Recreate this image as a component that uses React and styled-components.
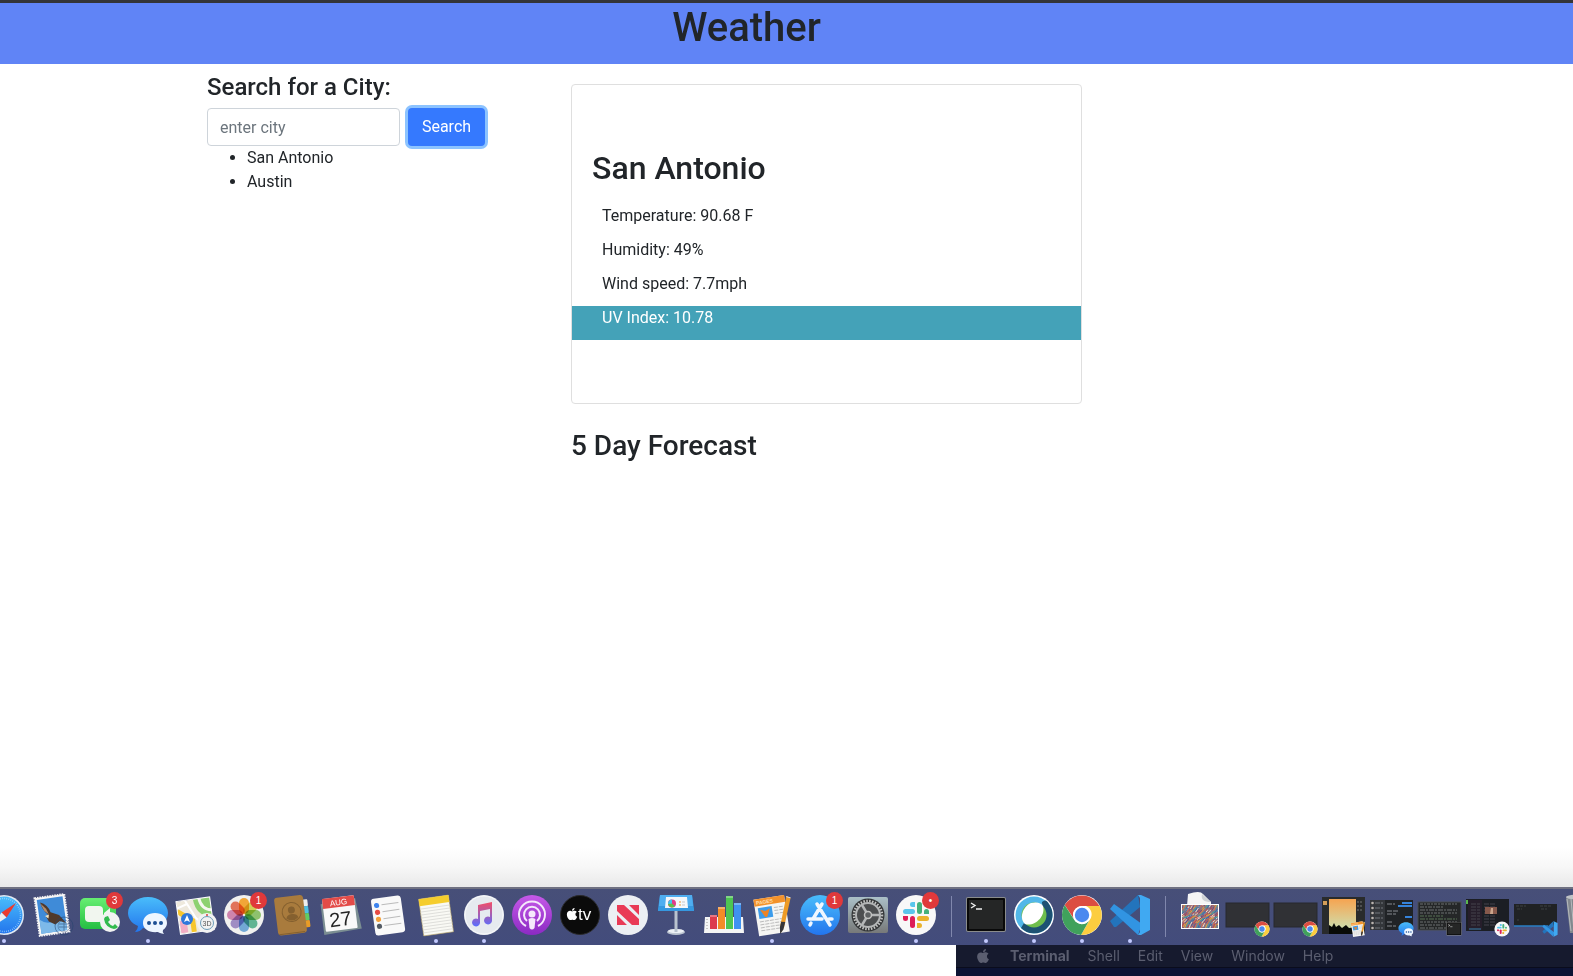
import React from "react";
import styled, { createGlobalStyle } from "styled-components";
import { FaApple } from "react-icons/fa";

const GlobalStyle = createGlobalStyle`
  *, *::before, *::after { box-sizing: border-box; }
  body {
    margin: 0;
    background: #fff;
    color: #212529;
    font: 400 16px/24px Roboto, Inter, "Liberation Sans", sans-serif;
  }
  h1, h2, h3, h4, p, ul { margin: 0; font-weight: 500; }
`;

const Screen = styled.div`
  display: flex;
  flex-direction: column;
  min-height: 100vh;
  overflow: hidden;
`;

const Banner = styled.header`
  height: 64px;
  padding-right: 80px;
  border-top: 3px solid #343538;
  background: #6084f6;
  text-align: center;
`;

const Title = styled.h1`
  font-size: 40px;
  line-height: 50px;
`;

const Main = styled.main`
  flex: 1;
  display: flex;
  padding: 0 16px 40px 207px;
  background: linear-gradient(to top, #e9e9e9, #f7f7f7 50%, #fff) bottom / 100% 40px no-repeat #fff;
`;

const Sidebar = styled.section`
  flex: 0 0 364px;
  padding-top: 8px;
`;

const SearchLabel = styled.label`
  display: block;
  margin-bottom: 6px;
  font-size: 24px;
  line-height: 30px;
  font-weight: 500;
`;

const SearchForm = styled.form`
  display: flex;
  flex-wrap: wrap;
`;

const CityInput = styled.input`
  width: 193px;
  height: 38px;
  margin-right: 8px;
  padding: 6px 12px;
  border: 1px solid #ced4da;
  border-radius: 4px;
  background: #fff;
  font: inherit;
  &::placeholder { color: #6c757d; opacity: 1; }
`;

const SearchButton = styled.button`
  min-width: 77px;
  height: 38px;
  padding: 0 12px;
  border: 0;
  border-radius: 4px;
  background: #3579fe;
  box-shadow: 0 0 0 3px #8cc3ff;
  color: #fff;
  font: inherit;
`;

const CityList = styled.ul`
  padding-left: 40px;
  font-weight: 400;
`;

const Results = styled.section`
  flex: 1;
  max-width: 511px;
  padding-top: 20px;
`;

const Card = styled.article`
  padding: 60px 0 63px;
  border: 1px solid #dfdfdf;
  border-radius: 4px;
`;

const CityName = styled.h2`
  padding: 0 20px;
  margin-bottom: 13px;
  font-size: 32px;
  line-height: 46px;
`;

const Reading = styled.p`
  height: 34px;
  padding: 0 30px;
  background: ${(p) => (p.$highlight ? "#44a2b8" : "transparent")};
  color: ${(p) => (p.$highlight ? "#fff" : "inherit")};
  font-weight: 400;
`;

const ForecastTitle = styled.h3`
  margin-top: 25px;
  font-size: 28px;
  line-height: 34px;
`;

const Dock = styled.nav`
  display: flex;
  height: 58px;
  margin-right: -80px;
  border-top: 2px solid #6f7181;
  background: linear-gradient(#474f78, #434c7c);
`;

const DockButton = styled.button`
  position: relative;
  flex: 0 0 48px;
  height: 56px;
  padding: 0;
  border: 0;
  background: none;
  &:first-child { margin-left: -20px; }
  & > svg { display: block; }
`;

const Badge = styled.span`
  position: absolute;
  top: 3px;
  right: 1px;
  width: 17px;
  height: 17px;
  border-radius: 50%;
  background: #e0393b;
  color: #fff;
  font-size: 10px;
  line-height: 17px;
`;

const RunningDot = styled.span`
  position: absolute;
  bottom: 2px;
  left: 22px;
  width: 4px;
  height: 4px;
  border-radius: 50%;
  background: #c3caff;
`;

const Divider = styled.span`
  flex: 0 0 22px;
  height: 41px;
  margin-top: 7px;
  background: linear-gradient(#8087ad, #8087ad) center / 1px 100% no-repeat;
`;

const SecondScreen = styled.div`
  display: flex;
  align-items: flex-start;
  gap: 18px;
  height: 31px;
  margin-left: 956px;
  padding-left: 19px;
  border-bottom: 8px solid #0c1334;
  background: #161a2e;
  box-shadow: inset 0 -1px #0a0c1c;
  color: #5b5e70;
  font-family: Inter, Roboto, sans-serif;
  font-size: 14px;
  line-height: 22px;
`;

const AppleMark = styled.span`
  display: flex;
  width: 17px;
  height: 22px;
  align-items: center;
`;

const MenuItem = styled.span`
  font-weight: ${(p) => (p.$strong ? 700 : 400)};
`;

const range = (n) => Array.from({ length: n }, (_, i) => i);

const Chrome = () => (
  <g>
    <circle r="20" fill="#fff" />
    <path d="M-17.3-10A20 20 0 0 1 17.3-9H0A9 9 0 0 0-8 4Z" fill="#dc4d41" />
    <path d="M17.6-9A20 20 0 0 1-1 20L8 4.500A9 9 0 0 0 4-9Z" fill="#fccd3f" />
    <path d="M-17.3-10A20 20 0 0 0-1 20L7.500 5A9 9 0 0 1-8 4.500Z" fill="#40a15c" />
    <circle r="9" fill="#fff" />
    <circle r="7.200" fill="#4a88ef" />
  </g>
);

const Code = () => (
  <g>
    <path d="M-20 6L8-20L10-8L-14 12L-16 12Z" fill="#2374bc" />
    <path d="M-20-6L-16-11L12 9L8 20Z" fill="#3194e2" />
    <path d="M8-20H11L20-16V15L11 20H8L10 17V-17Z" fill="#40a9f2" />
  </g>
);

const Messages = () => (
  <g>
    <path d="M0-18C11-18 20-11 20-2S11 14 0 14L-5 13Q-8 17-13 17Q-10 14-10 11C-17 8-20 3-20-2C-20-11-11-18 0-18Z" fill="url(#sky)" />
    <path d="M7-2C14-2 19 2 19 8Q19 12 15 15Q14 17 16 19Q11 18 10 17C1 18-5 14-5 8S0-2 7-2Z" fill="#eef6ff" />
    {[1, 7, 13].map((x) => <circle key={x} cx={x} cy="8" r="2" fill="#1d4f93" />)}
  </g>
);

const Slack = () => (
  <g>
    <circle r="20" fill="#f8f8f8" />
    {[["#59c5ec", 0], ["#44b17c", 90], ["#eab32d", 180], ["#dd1e58", 270]].map(([c, r]) => (
      <g key={c} transform={`rotate(${r})`} fill={c}>
        <rect x="-13" y="-6" width="12" height="5" rx="2.500" />
        <path d="M-1-8V-13H-3.500A2.500 2.500 0 0 0-3.500-8Z" />
      </g>
    ))}
  </g>
);

const Terminal = () => (
  <g>
    <rect x="-20" y="-18" width="40" height="35" rx="2" fill="#8a8c8c" />
    <rect x="-19" y="-17" width="38" height="33" rx="1" fill="#090909" />
    <rect x="-17" y="-15" width="34" height="29" fill="#252626" />
    <path d="M-15-12L-11-9.500L-15-7M-10-6H-4" stroke="#eee" strokeWidth="1.400" fill="none" />
  </g>
);

const Pages = () => (
  <g transform="rotate(-9)">
    <rect x="-16" y="-18" width="31" height="37" fill="#f5f5f3" />
    <rect x="-16" y="-18" width="31" height="7" fill="#f3922b" />
    <text x="-14" y="-12.500" fontSize="5" fontWeight="700" fill="#ffe0b5">PAGES</text>
    <rect x="-13" y="-9" width="14" height="11" fill="#3c9ceb" />
    <path d="M-11-7L-6-5L-1-7L-5 1H-7Z" fill="#ed8426" />
    {range(7).map((i) => <path key={i} d={i < 3 ? `M3 ${-7 + i * 3}H12` : `M-13 ${-4 + i * 3}H9`} stroke="#bbb" strokeDasharray="4 1" />)}
    <path d="M17-16L21-14L10 14L6 19L6 13Z" fill="#ee9b26" />
    <path d="M8 8L12 9L9 16L5 20L6 13Z" fill="#35363b" />
    <path d="M17-16L21-14" stroke="#eee" />
  </g>
);

const Safari = () => (
  <g>
    <circle r="20" fill="#dfe8f2" />
    <circle r="18.500" fill="url(#sky)" />
    <circle r="16.500" fill="none" stroke="#b6e3ff" strokeWidth="1.500" strokeDasharray=".6 1.500" />
    <path d="M12-12L2.500 2.500L-2.500-2.500Z" fill="#eb3b2e" />
    <path d="M-12 12L2.500 2.500L-2.500-2.500Z" fill="#eee" />
  </g>
);

const Mail = () => (
  <g>
    <g transform="rotate(-8)">
      <rect x="-15" y="-19" width="30" height="38" fill="#f6f6f6" stroke="#f6f6f6" strokeWidth="2" strokeDasharray="1.500 1" />
      <rect x="-13" y="-17" width="26" height="34" fill="#3f8bd8" />
      <path d="M-13 3Q-4 11 4 4L13 9V17H-13Z" fill="#7db9e9" />
      <path d="M-10-14Q-3-11-1-3L7 1L13 10L7 7L2 10L-4 6L-6 1L-4-1Q-9-6-10-14Z" fill="#50392b" />
      <path d="M-10-13L-5-7L-3-1L-7-5Z" fill="#b08d70" />
      <path d="M-7 0L-3-1L-4 3Z" fill="#f3e6c3" />
    </g>
    <circle cx="12" cy="11" r="9" fill="none" stroke="#25446e" opacity=".55" />
    <circle cx="12" cy="11" r="6" fill="none" stroke="#25446e" opacity=".4" />
    <path d="M7 9H17M7 12H17M12 6V16" stroke="#25446e" opacity=".55" />
  </g>
);

const FaceTime = () => (
  <g>
    <rect x="-20" y="-17" width="36" height="31" rx="5" fill="url(#lime)" />
    <rect x="-15" y="-9" width="18" height="16" rx="4" fill="#f1f6ef" />
    <path d="M4-2L10-7V5H4Z" fill="#f1f6ef" />
    <circle cx="10" cy="7" r="10" fill="#f1f3f2" />
    <path d="M5 2L8 1L10 5L8 7Q10 10 13 11L15 9L18 12Q16 14 14 14Q5 12 4 4Z" fill="#32ba4e" />
  </g>
);

const Maps = () => (
  <g>
    <g transform="rotate(-8)">
      <svg x="-18" y="-16" width="34" height="33" viewBox="-18 -16 34 33">
        <rect x="-18" y="-16" width="34" height="33" fill="#eee9dd" />
        <path d="M-17 4H-10V16H-17Z" fill="#f2adc4" />
        <path d="M-1-16H16V4Q0 2-1-16Z" fill="#8ed171" />
        <path d="M5-17Q6-4 17-3" stroke="#f7f7f1" strokeWidth="3" fill="none" />
        <path d="M-18-6L-4 5V18" stroke="#f7c62d" strokeWidth="5" fill="none" />
        <path d="M-9-16L-1 2L9 16M-18-9L-8-12" stroke="#fff" strokeWidth="2" fill="none" />
      </svg>
      <rect x="-18" y="-16" width="34" height="33" fill="none" stroke="#fff" />
    </g>
    <circle cx="-9" cy="4" r="6" fill="#2f78db" />
    <path d="M-9 0L-6 7L-9 5.500L-12 7Z" fill="#fff" />
    <circle cx="11" cy="8" r="10" fill="#f2f2f2" />
    <circle cx="11" cy="8" r="6.500" fill="none" stroke="#6b9cb9" />
    <text x="11" y="10.500" fontSize="7" textAnchor="middle" fill="#555">3D</text>
    <circle cx="11" cy="0" r="1" fill="#d8403c" />
  </g>
);

const Photos = () => (
  <g>
    <circle r="20" fill="#f1f1ef" />
    {["#ffa31a", "#d7d73e", "#85c55d", "#4fb58d", "#63a5e0", "#9a84c9", "#d479ae", "#ed6544"].map((c, i) => (
      <Petal key={c} x="-5" y="-17" width="10" height="16" rx="5" fill={c} opacity=".86" transform={`rotate(${i * 45})`} />
    ))}
  </g>
);

const Petal = styled.rect`
  mix-blend-mode: multiply;
`;

const Contacts = () => (
  <g transform="rotate(-7)">
    {["#eee", "#4fc1e3", "#62cb63", "#e99c27"].map((c, i) => <rect key={c} x="11" y={-14 + i * 7} width="6" height="7" rx="1" fill={c} />)}
    <rect x="-16" y="-19" width="29" height="38" rx="3" fill="#a97b3d" />
    <path d="M-15 18H11" stroke="#85602f" />
    <circle cy="-3" r="9.500" fill="none" stroke="#85602f" />
    <circle cy="-5" r="3.500" fill="#85602f" />
    <path d="M-6 3Q-5-1 0-1T6 3Q0 8-6 3Z" fill="#85602f" />
  </g>
);

const Calendar = () => (
  <g transform="rotate(-7)">
    <path d="M-18-13L17-15L20 16L-18 18Z" fill="#7b8e92" />
    <rect x="-16" y="-18" width="32" height="33" rx="1" fill="#f9f9f9" />
    <rect x="-16" y="-18" width="32" height="10" fill="#e34b48" />
    <text y="-10" fontSize="8" textAnchor="middle" fill="#fff">AUG</text>
    <text y="11" fontSize="20" fontWeight="300" textAnchor="middle" fill="#252525">27</text>
  </g>
);

const Reminders = () => (
  <g transform="rotate(-8)">
    <rect x="-15" y="-18" width="30" height="37" rx="3" fill="#f9f9f9" />
    {["#3d83ef", "#e84b44", "#f3a03b", "#535b64"].map((c, i) => (
      <g key={c}>
        <circle cx="-10" cy={-11 + i * 7} r="2.600" fill={c} />
        <path d={`M-5 ${-11 + i * 7}H12`} stroke="#bbb" />
      </g>
    ))}
  </g>
);

const Notes = () => (
  <g transform="rotate(-8)">
    <rect x="-15" y="-18" width="30" height="37" fill="#f9f9f4" stroke="#b8a363" strokeWidth=".6" />
    <rect x="-15" y="-18" width="30" height="7" fill="#f5cd2d" />
    {range(9).map((i) => <path key={i} d={`M-15 ${-8 + i * 3}H15`} stroke="#d9d9d6" strokeWidth=".8" />)}
  </g>
);

const Music = () => (
  <g>
    <circle r="20" fill="#e6eaef" />
    <circle r="19" fill="none" stroke="#f9fafc" />
    <path d="M-6-10L8-13V6A4 4 0 1 1 6 2V-6L-4-4V8A4 4 0 1 1-6 4Z" fill="url(#note)" />
  </g>
);

const Podcasts = () => (
  <g>
    <circle r="20" fill="url(#purple)" />
    <g fill="none" stroke="#f5e9fb" strokeWidth="2">
      <path d="M-6 11A13 13 0 1 1 6 11" />
      <path d="M-5 6A8 8 0 1 1 5 6" />
    </g>
    <circle cy="-1" r="3.500" fill="#f5e9fb" />
    <path d="M-3.500 4Q0 2 3.500 4L2.500 13Q0 16-2.500 13Z" fill="#f5e9fb" />
  </g>
);

const AppleTv = () => (
  <g>
    <circle r="19.500" fill="#0b0b0b" stroke="#2a2a2b" />
    <FaApple x={-15} y={-8} size={14} color="#fff" />
    <text x="-2" y="5" fontSize="17" fontWeight="500" fill="#fff">tv</text>
  </g>
);

const News = () => (
  <g>
    <circle r="20" fill="#eceff3" />
    <path d="M-11-10H-4L11 4V10H4L-11-4ZM1-10H11V0ZM-11 0L-1 10H-11Z" fill="#e93a56" />
  </g>
);

const Keynote = () => (
  <g>
    <ellipse cy="17" rx="9" ry="3" fill="#bcc5d1" />
    <ellipse cy="16" rx="8" ry="2" fill="#edf1f5" />
    <rect x="-1.500" y="-4" width="3" height="21" fill="#b9c3cf" />
    <path d="M-16-20H16L18-6V-4H-18V-6Z" fill="#3698e0" />
    <path d="M-16-20H16L17-9H-17Z" fill="#50aef0" />
    <path d="M-10-18H11L12-7H-11Z" fill="#f6f8fa" />
    <circle cx="-4" cy="-11.500" r="4" fill="#e23b8a" />
    <path d="M-4-15.500A4 4 0 0 0-8-11H-4Z" fill="#45c4ea" />
    <path d="M-8-11A4 4 0 0 0-1-9L-4-11.500Z" fill="#5dc14b" />
    <path d="M3-13H5M3-10H5" stroke="#e99b38" />
    <path d="M6-13H9M6-10H9" stroke="#c5c9ce" />
  </g>
);

const Numbers = () => (
  <g>
    <path d="M-19 2H19L20 18H-20Z" fill="#f4f5f5" />
    <path d="M-17 4V16" stroke="#999" strokeDasharray="1 2" />
    {[[-14, 0, "#dc3b4d"], [-6, -8, "#f38c27"], [2, -19, "#4dc552"], [10, -12, "#3f92f0"]].map(([x, y, c]) => (
      <g key={x}><rect x={x} y={y} width="7" height={14 - y} fill={c} /><rect x={x} y={y} width="7" height="2" fill="#fff" opacity=".3" /></g>
    ))}
  </g>
);

const AppStore = () => (
  <g>
    <circle r="20" fill="url(#sky)" />
    <g stroke="#f0f7ff" strokeWidth="3.500" strokeLinecap="round" fill="none">
      <path d="M2-11L-7 4M-3-11L10 10M-12 4H2M9 4H12M-9 8L-10 10" />
    </g>
  </g>
);

const Settings = () => (
  <g>
    <rect x="-20" y="-18" width="40" height="36" rx="2" fill="url(#steel)" />
    <circle r="16.500" fill="#333537" />
    <circle r="14" fill="none" stroke="#c2c3c2" strokeWidth="2.500" strokeDasharray="1.500 1.400" />
    <circle r="12" fill="#4c4e50" stroke="#b4b6b7" strokeWidth="2" />
    <path d="M0 0L11 0M0 0L-6-10M0 0L-6 10" stroke="#b4b6b7" strokeWidth="2.500" />
    <circle r="3.500" fill="#5e6163" stroke="#c2c3c2" strokeWidth="1.500" />
  </g>
);

const Webex = () => (
  <g>
    <circle r="20" fill="#fff" />
    <circle r="18.500" fill="#52b7e8" />
    <path d="M8-13Q12-17 15-11A18.500 18.500 0 0 1-13 13L-10 8Q2 13 9 4Z" fill="#1d5273" />
    <circle r="12.500" fill="#6fbe4c" />
    <path d="M9-9C12 2 0 12-9 9C-15 4-12-8-3-12Q6-14 9-9Z" fill="#fff" />
  </g>
);

const artColors = ["#2e6caf", "#e8a13b", "#c94646", "#eee2cd", "#4a9ea0", "#694c83", "#d76a55"];

const Artwork = () => (
  <g>
    <path d="M-13-9L-12-21Q0-25 3-21L11-13V-9Z" fill="#f5f5f5" />
    <path d="M2-21Q0-13 11-13Z" fill="#cfd2d5" />
    <rect x="-19" y="-11" width="38" height="25" fill="#fff" />
    <svg x="-18" y="-10" width="36" height="23" viewBox="0 0 36 23">
      <rect width="36" height="23" fill="#8a7684" />
      {range(44).map((i) => (
        <path key={i} d={`M${i * 1.5 - 26} 23q3-9 10-11t12-13`} fill="none" stroke={artColors[(i * 3) % 7]} strokeWidth="1" strokeDasharray={`${5 + (i % 4)} ${2 + (i % 3)}`} strokeDashoffset={(i * 7) % 11} />
      ))}
      {range(44).map((i) => (
        <path key={`b${i}`} d={`M${i * 1.5 - 26} 23q3-9 10-11t12-13`} fill="none" stroke={artColors[(i * 5 + 2) % 7]} strokeWidth="1" strokeDasharray="4 9" strokeDashoffset={(i * 5) % 13} />
      ))}
    </svg>
  </g>
);

const MiniApp = ({ children }) => <g transform="translate(14 14) scale(.38)">{children}</g>;

const ChromeWindow = () => (
  <g>
    <rect x="-22" y="-12" width="43" height="24" fill="#303135" stroke="#27292f" />
    <MiniApp><Chrome /></MiniApp>
  </g>
);

const PagesWindow = () => (
  <g>
    <rect x="-22" y="-18" width="43" height="37" fill="#292b2c" />
    <rect x="-15" y="-16" width="27" height="34" fill="url(#sunset)" />
    <path d="M-15 10L-12 12L-10 8L-8 12L-5 10L-2 13L2 10L5 13L12 12V19H-15Z" fill="#080b07" />
    <rect x="-21" y="-14" width="4" height="4" fill="#d49d58" />
    <path d="M13-13H19M13-9H19M13-5H18" stroke="#777" strokeDasharray="2 1" />
    <MiniApp><Pages /></MiniApp>
  </g>
);

const MessagesWindow = () => (
  <g>
    <rect x="-22" y="-15" width="43" height="30" fill="#202326" />
    <rect x="-22" y="-15" width="15" height="30" fill="#33363a" />
    {range(6).map((i) => (
      <g key={i}>
        <circle cx="-19.500" cy={-12 + i * 5} r="1.300" fill="#b9b3ae" />
        <path d={`M-17 ${-12 + i * 5}h8`} stroke="#73777d" strokeDasharray="5 1" />
      </g>
    ))}
    <path d="M10-12H20M6-9H20M13 2H20" stroke="#3583dc" strokeWidth="2" />
    <path d="M-5-11H3M-5-4H6M-5-1H4M-5 7H1M-5 11H4" stroke="#85898e" strokeDasharray="5 1" />
    <MiniApp><Messages /></MiniApp>
  </g>
);

const TerminalWindow = () => (
  <g>
    <rect x="-22" y="-13" width="43" height="28" fill="#252728" stroke="#4b4e50" />
    {range(9).map((i) => <path key={i} d={`M-20 ${-11 + i * 3}h${i % 3 === 1 ? 24 : 37}`} stroke={i > 3 && i < 6 ? "#587355" : "#6d7070"} strokeDasharray={`${3 + (i % 3)} 1 2 1`} />)}
    <MiniApp><Terminal /></MiniApp>
  </g>
);

const SlackWindow = () => (
  <g>
    <rect x="-22" y="-16" width="43" height="32" fill="#1b1e24" />
    <rect x="-20" y="-15" width="14" height="30" fill="#261e2b" />
    <path d="M-21-15V-11" stroke="#59b84c" strokeWidth="2" />
    {range(8).map((i) => <path key={i} d={`M-17 ${-11 + i * 3}h9m4 0h12`} stroke="#44424d" strokeDasharray="5 1" />)}
    <path d="M-3-8H9V-1H-3Z" fill="#87594c" />
    <path d="M3-7H5V-1H2Z" fill="#cba58c" />
    <path d="M-19 14H-7" stroke="#397eaa" />
    <MiniApp><Slack /></MiniApp>
  </g>
);

const CodeWindow = () => (
  <g>
    <rect x="-22" y="-11" width="43" height="22" fill="#202224" />
    <path d="M-20-9H-10M4-9H16M-19-6H-14M5-6H11M-19 5H-17" stroke="#3c4042" strokeDasharray="3 1" />
    <path d="M-22 11H12" stroke="#297fc4" strokeWidth="1.500" />
    <MiniApp><Code /></MiniApp>
  </g>
);

const Trash = () => (
  <g>
    <path d="M-18-18H18L14 18H-14Z" fill="#82888e" />
    <path d="M-17-16L-13 16M-13-16L-10 16" stroke="#b5babd" />
    <ellipse cy="-18" rx="18" ry="3" fill="#bfc3c6" />
  </g>
);

const dockItems = [
  { name: "Safari", Icon: Safari, running: true },
  { name: "Mail", Icon: Mail },
  { name: "FaceTime", Icon: FaceTime, badge: "3" },
  { name: "Messages", Icon: Messages, running: true },
  { name: "Maps", Icon: Maps },
  { name: "Photos", Icon: Photos, badge: "1" },
  { name: "Contacts", Icon: Contacts },
  { name: "Calendar", Icon: Calendar },
  { name: "Reminders", Icon: Reminders },
  { name: "Notes", Icon: Notes, running: true },
  { name: "Music", Icon: Music, running: true },
  { name: "Podcasts", Icon: Podcasts },
  { name: "Apple TV", Icon: AppleTv },
  { name: "News", Icon: News },
  { name: "Keynote", Icon: Keynote },
  { name: "Numbers", Icon: Numbers },
  { name: "Pages", Icon: Pages, running: true },
  { name: "App Store", Icon: AppStore, badge: "1" },
  { name: "System Preferences", Icon: Settings },
  { name: "Slack", Icon: Slack, badge: "•", running: true },
  { name: "divider-apps" },
  { name: "Terminal", Icon: Terminal, running: true },
  { name: "Webex", Icon: Webex, running: true },
  { name: "Chrome", Icon: Chrome, running: true },
  { name: "Visual Studio Code", Icon: Code, running: true },
  { name: "divider-windows" },
  { name: "Artwork", Icon: Artwork },
  { name: "Chrome window 1", Icon: ChromeWindow },
  { name: "Chrome window 2", Icon: ChromeWindow },
  { name: "Pages window", Icon: PagesWindow },
  { name: "Messages window", Icon: MessagesWindow },
  { name: "Terminal window", Icon: TerminalWindow },
  { name: "Slack window", Icon: SlackWindow },
  { name: "Code window", Icon: CodeWindow },
  { name: "Trash", Icon: Trash },
];

const gradients = [
  ["sky", "#49bdfb", "#2375ed"],
  ["lime", "#67ee72", "#24bf43"],
  ["note", "#f34e67", "#596dff"],
  ["purple", "#c659e8", "#8b2ac3"],
  ["steel", "#abc0c8", "#777979"],
  ["sunset", "#f6a451", "#c9e7ba"],
];

const GradientDefs = styled.svg`
  position: absolute;
`;

const Gradients = () => (
  <GradientDefs width="0" height="0" aria-hidden="true">
    <defs>
      {gradients.map(([id, from, to]) => (
        <linearGradient key={id} id={id} x2="0" y2="1">
          <stop stopColor={from} />
          <stop offset="1" stopColor={to} />
        </linearGradient>
      ))}
    </defs>
  </GradientDefs>
);

export default function App() {
  return (
    <Screen>
      <GlobalStyle />
      <Gradients />
      <Banner><Title>Weather</Title></Banner>
      <Main>
        <Sidebar>
          <SearchLabel htmlFor="city">Search for a City:</SearchLabel>
          <SearchForm onSubmit={(e) => e.preventDefault()}>
            <CityInput id="city" type="text" placeholder="enter city" />
            <SearchButton type="submit">Search</SearchButton>
          </SearchForm>
          <CityList>
            <li>San Antonio</li>
            <li>Austin</li>
          </CityList>
        </Sidebar>
        <Results>
          <Card>
            <CityName>San Antonio</CityName>
            <Reading>Temperature: 90.68 F</Reading>
            <Reading>Humidity: 49%</Reading>
            <Reading>Wind speed: 7.7mph</Reading>
            <Reading $highlight>UV Index: 10.78</Reading>
          </Card>
          <ForecastTitle>5 Day Forecast</ForecastTitle>
        </Results>
      </Main>
      <Dock aria-label="Dock">
        {dockItems.map(({ name, Icon, badge, running }) =>
          Icon ? (
            <DockButton key={name} type="button" aria-label={name}>
              <svg width="48" height="56" viewBox="-24 -26 48 56"><Icon /></svg>
              {badge && <Badge>{badge}</Badge>}
              {running && <RunningDot />}
            </DockButton>
          ) : (
            <Divider key={name} />
          )
        )}
      </Dock>
      <SecondScreen>
        <AppleMark><FaApple size={16} /></AppleMark>
        <MenuItem $strong>Terminal</MenuItem>
        <MenuItem>Shell</MenuItem>
        <MenuItem>Edit</MenuItem>
        <MenuItem>View</MenuItem>
        <MenuItem>Window</MenuItem>
        <MenuItem>Help</MenuItem>
      </SecondScreen>
    </Screen>
  );
}
